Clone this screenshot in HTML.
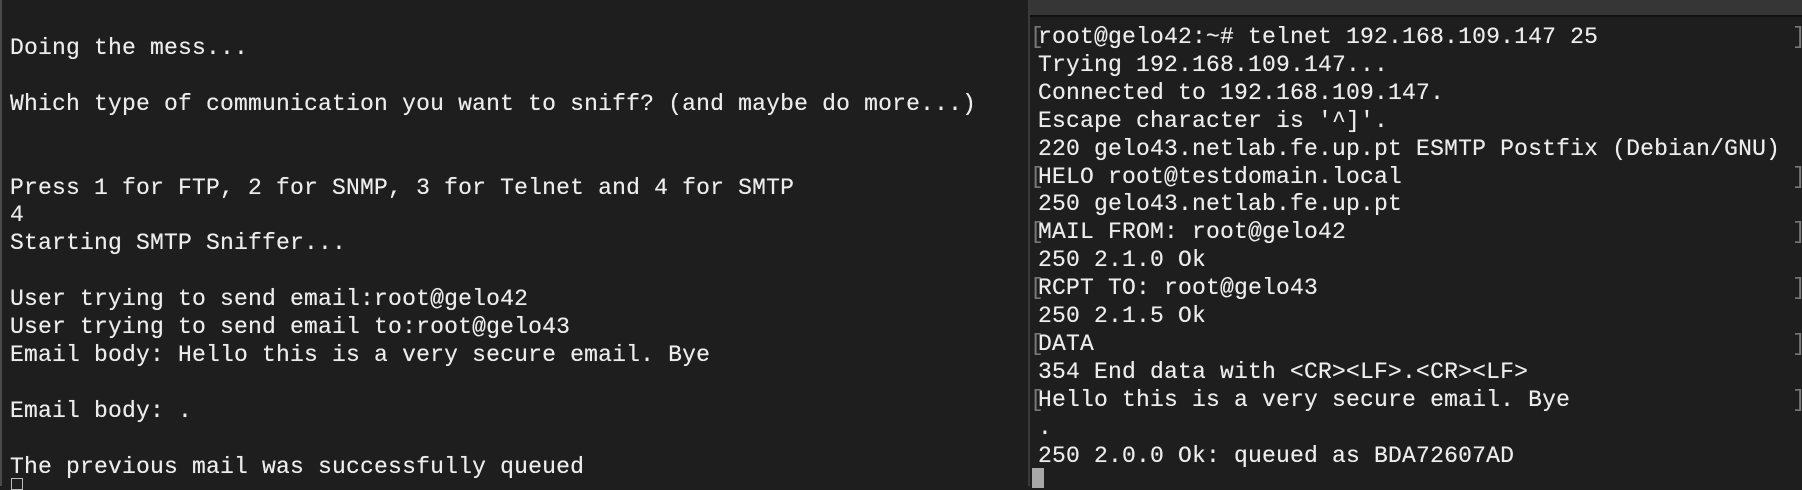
<!DOCTYPE html>
<html><head><meta charset="utf-8"><style>
html,body{margin:0;padding:0;}
body{width:1802px;height:486px;background:#1e1e1e;position:relative;overflow:hidden;font-family:"Liberation Mono",monospace;font-size:23px;letter-spacing:0.2px;color:#ececec;}
.pane{position:absolute;top:0;height:486px;}
#l{left:0;width:1028px;background:#1e1e1e;border-left:2px solid #4a4a4a;box-sizing:border-box;}
#r{left:1028px;width:774px;background:#1e1e1e;border-left:2px solid #3a3a3a;box-sizing:border-box;}
#bar{position:absolute;left:0;top:0;right:0;height:15px;background:#363636;border-bottom:2px solid #111;}
.t{position:absolute;white-space:pre;line-height:27.9px;margin:0;text-shadow:0 0 0.4px #ececec;}
#lt{left:8px;top:35px;}
#rt{left:8px;top:24px;}
.br{position:absolute;color:#777;line-height:27.9px;}
#lc{position:absolute;left:9px;top:478px;width:10px;height:10px;border:1px solid #bbb;}
#rc{position:absolute;left:2px;top:468px;width:12px;height:20px;background:#a8a8a8;}
</style></head><body>
<div class="pane" id="l">
<div class="t" id="lt">Doing the mess...

Which type of communication you want to sniff? (and maybe do more...)


Press 1 for FTP, 2 for SNMP, 3 for Telnet and 4 for SMTP
4
Starting SMTP Sniffer...

User trying to send email:root@gelo42
User trying to send email to:root@gelo43
Email body: Hello this is a very secure email. Bye

Email body: .

The previous mail was successfully queued</div>
<div id="lc"></div>
</div>
<div class="pane" id="r">
<div id="bar"></div>
<div class="t" id="rt">root@gelo42:~# telnet 192.168.109.147 25
Trying 192.168.109.147...
Connected to 192.168.109.147.
Escape character is '^]'.
220 gelo43.netlab.fe.up.pt ESMTP Postfix (Debian/GNU)
HELO root@testdomain.local
250 gelo43.netlab.fe.up.pt
MAIL FROM: root@gelo42
250 2.1.0 Ok
RCPT TO: root@gelo43
250 2.1.5 Ok
DATA
354 End data with &lt;CR&gt;&lt;LF&gt;.&lt;CR&gt;&lt;LF&gt;
Hello this is a very secure email. Bye
.
250 2.0.0 Ok: queued as BDA72607AD</div>
<div class="br" style="left:0;top:24px">[</div>
<div class="br" style="left:0;top:163.5px">[</div>
<div class="br" style="left:0;top:219.3px">[</div>
<div class="br" style="left:0;top:275.1px">[</div>
<div class="br" style="left:0;top:330.9px">[</div>
<div class="br" style="left:0;top:386.7px">[</div>
<div class="br" style="left:762px;top:24px">]</div>
<div class="br" style="left:762px;top:163.5px">]</div>
<div class="br" style="left:762px;top:219.3px">]</div>
<div class="br" style="left:762px;top:275.1px">]</div>
<div class="br" style="left:762px;top:330.9px">]</div>
<div class="br" style="left:762px;top:386.7px">]</div>
<div id="rc"></div>
</div>
</body></html>
